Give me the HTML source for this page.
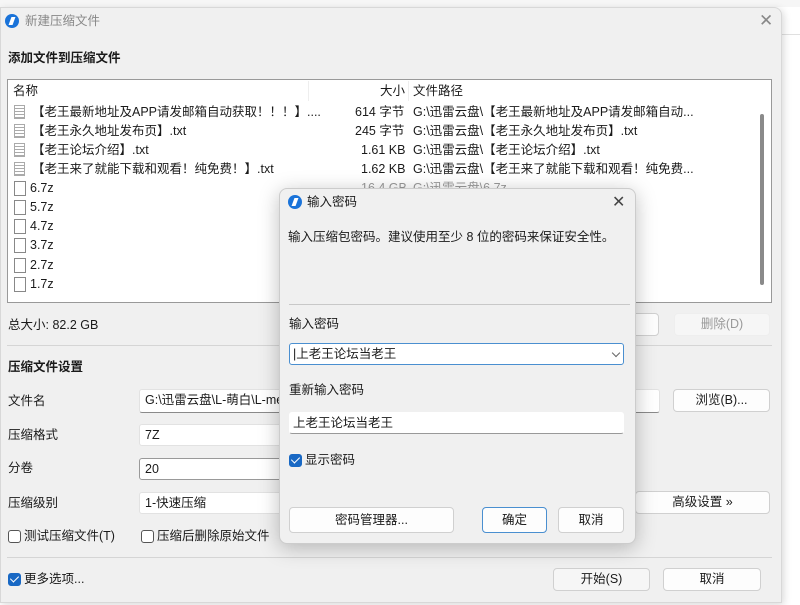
<!DOCTYPE html>
<html><head><meta charset="utf-8"><style>
*{box-sizing:border-box;margin:0;padding:0}
body{width:800px;height:605px;background:#fff;font-family:"Liberation Sans","Noto Sans CJK SC",sans-serif;font-size:12.5px;color:#1a1a1a;position:relative;overflow:hidden}
.a{position:absolute;white-space:nowrap;line-height:15px}
.win{position:absolute;left:0;top:7px;width:782px;height:596px;background:#f0f0f0;border:1px solid #d8d8d8;border-radius:0 8px 0 0;box-shadow:2px 2px 8px rgba(0,0,0,.15)}
.btn{position:absolute;background:#fdfdfd;border:1px solid #d0d0d0;border-radius:4px;text-align:center;line-height:21px}
.inp{position:absolute;background:#fff;border:1px solid #e2e2e2;border-bottom:1px solid #8a8a8a;border-radius:3px;padding-left:5px;line-height:20px}
.cb{position:absolute;width:13px;height:13px;border:1px solid #555;border-radius:3px;background:#fff}
.cb.on{background:#1868c4;border-color:#1868c4}
.cb.on:after{content:"";position:absolute;left:3px;top:0px;width:4px;height:7px;border:solid #fff;border-width:0 1.5px 1.5px 0;transform:rotate(45deg)}
.fi{position:absolute;width:12px;height:15px;border:1px solid #888;background:#fff}
.ti{position:absolute;width:11px;height:14px;background:repeating-linear-gradient(#fff 0 2px,#aaa 2px 3px);border:1px solid #aaa}
.logo{position:absolute;width:14px;height:14px;border-radius:50%;background:#1a73d9}
.logo:after{content:"";position:absolute;left:5px;top:3px;width:4px;height:8px;background:#fff;transform:skew(-20deg)}
.sep{position:absolute;height:1px;background:#d5d5d5}
.chev{position:absolute;width:6px;height:6px;border:solid #666;border-width:0 1px 1px 0;transform:rotate(45deg)}
</style></head><body>
<div class="a" style="left:0;top:0;width:800px;height:7px;background:#f6f6f6"></div>
<div class="a" style="left:782px;top:34px;width:18px;height:1px;background:#e0e0e0"></div>
<div class="win"></div>
<div class="logo" style="left:5px;top:14px"></div>
<div class="a" style="left:25px;top:14px;color:#888">新建压缩文件</div>
<div class="a" style="left:759px;top:12px;font-size:17px;line-height:18px;color:#888">✕</div>
<div class="a" style="left:8px;top:51px;font-weight:bold">添加文件到压缩文件</div>
<div class="a" style="left:7px;top:79px;width:765px;height:224px;background:#fff;border:1px solid #999"></div>
<div class="a" style="left:308px;top:81px;width:1px;height:20px;background:#eee"></div>
<div class="a" style="left:408px;top:81px;width:1px;height:20px;background:#eee"></div>
<div class="a" style="left:13px;top:84px">名称</div>
<div class="a" style="left:380px;top:84px">大小</div>
<div class="a" style="left:413px;top:84px">文件路径</div>
<div class="a" style="left:760px;top:114px;width:4px;height:171px;background:#8a8a8a;border-radius:2px"></div>

<div class="ti" style="left:14px;top:105px"></div><div class="a" style="left:32px;top:105px">【老王最新地址及APP请发邮箱自动获取！！！】....</div><div class="a" style="left:355px;top:105px">614 字节</div><div class="a" style="left:413px;top:105px">G:\迅雷云盘\【老王最新地址及APP请发邮箱自动...</div>
<div class="ti" style="left:14px;top:124px"></div><div class="a" style="left:32px;top:124px">【老王永久地址发布页】.txt</div><div class="a" style="left:355px;top:124px">245 字节</div><div class="a" style="left:413px;top:124px">G:\迅雷云盘\【老王永久地址发布页】.txt</div>
<div class="ti" style="left:14px;top:143px"></div><div class="a" style="left:32px;top:143px">【老王论坛介绍】.txt</div><div class="a" style="left:361px;top:143px">1.61 KB</div><div class="a" style="left:413px;top:143px">G:\迅雷云盘\【老王论坛介绍】.txt</div>
<div class="ti" style="left:14px;top:162px"></div><div class="a" style="left:32px;top:162px">【老王来了就能下载和观看！纯免费！】.txt</div><div class="a" style="left:361px;top:162px">1.62 KB</div><div class="a" style="left:413px;top:162px">G:\迅雷云盘\【老王来了就能下载和观看！纯免费...</div>
<div class="fi" style="left:14px;top:181px"></div><div class="a" style="left:30px;top:181px">6.7z</div><div class="a" style="left:361px;top:181px;color:#999">16.4 GB</div><div class="a" style="left:413px;top:181px;color:#999">G:\迅雷云盘\6.7z</div>
<div class="fi" style="left:14px;top:200px"></div><div class="a" style="left:30px;top:200px">5.7z</div>
<div class="fi" style="left:14px;top:219px"></div><div class="a" style="left:30px;top:219px">4.7z</div>
<div class="fi" style="left:14px;top:238px"></div><div class="a" style="left:30px;top:238px">3.7z</div>
<div class="fi" style="left:14px;top:258px"></div><div class="a" style="left:30px;top:258px">2.7z</div>
<div class="fi" style="left:14px;top:277px"></div><div class="a" style="left:30px;top:277px">1.7z</div>

<div class="a" style="left:8px;top:318px">总大小: 82.2 GB</div>
<div class="btn" style="left:560px;top:313px;width:99px;height:23px"></div>
<div class="btn" style="left:674px;top:313px;width:96px;height:23px;color:#999;background:#f6f6f6;border-color:#eee">删除(D)</div>
<div class="sep" style="left:7px;top:345px;width:765px"></div>
<div class="a" style="left:8px;top:360px;font-weight:bold">压缩文件设置</div>
<div class="a" style="left:8px;top:394px">文件名</div>
<div class="inp" style="left:139px;top:389px;width:521px;height:24px">G:\迅雷云盘\L-萌白\L-meng</div>
<div class="btn" style="left:673px;top:389px;width:97px;height:23px">浏览(B)...</div>
<div class="a" style="left:8px;top:428px">压缩格式</div>
<div class="inp" style="left:139px;top:424px;width:150px;height:22px;border-bottom-color:#e2e2e2">7Z</div>
<div class="a" style="left:8px;top:461px">分卷</div>
<div class="inp" style="left:139px;top:458px;width:150px;height:22px;border-color:#999">20</div>
<div class="a" style="left:8px;top:496px">压缩级别</div>
<div class="inp" style="left:139px;top:492px;width:150px;height:22px;border-bottom-color:#e2e2e2">1-快速压缩</div>
<div class="btn" style="left:635px;top:491px;width:135px;height:23px">高级设置 »</div>
<div class="cb" style="left:8px;top:530px"></div><div class="a" style="left:24px;top:529px">测试压缩文件(T)</div>
<div class="cb" style="left:141px;top:530px"></div><div class="a" style="left:157px;top:529px">压缩后删除原始文件</div>
<div class="sep" style="left:7px;top:557px;width:765px"></div>
<div class="cb on" style="left:8px;top:573px"></div><div class="a" style="left:24px;top:572px">更多选项...</div>
<div class="btn" style="left:553px;top:568px;width:97px;height:23px;background:#f6f6f6">开始(S)</div>
<div class="btn" style="left:663px;top:568px;width:98px;height:23px">取消</div>

<div class="a" style="left:279px;top:188px;width:357px;height:356px;background:#f0f0f0;border:1px solid #ccc;border-radius:8px;box-shadow:0 4px 20px rgba(0,0,0,.25)"></div>
<div class="logo" style="left:288px;top:195px"></div>
<div class="a" style="left:307px;top:195px">输入密码</div>
<div class="a" style="left:612px;top:194px;font-size:16px;line-height:17px;color:#444">✕</div>
<div class="a" style="left:288px;top:230px">输入压缩包密码。建议使用至少 8 位的密码来保证安全性。</div>
<div class="sep" style="left:289px;top:304px;width:341px;background:#c8c8c8"></div>
<div class="a" style="left:289px;top:317px">输入密码</div>
<div class="inp" style="left:289px;top:343px;width:335px;height:22px;border:1px solid #4a8fd0;padding-left:3px">|上老王论坛当老王</div>
<div class="chev" style="left:613px;top:350px"></div>
<div class="a" style="left:289px;top:383px">重新输入密码</div>
<div class="inp" style="left:289px;top:412px;width:335px;height:22px;border-color:#fff;border-bottom-color:#999;padding-left:3px">上老王论坛当老王</div>
<div class="cb on" style="left:289px;top:454px"></div><div class="a" style="left:305px;top:453px">显示密码</div>
<div class="btn" style="left:289px;top:507px;width:165px;height:26px;line-height:24px">密码管理器...</div>
<div class="btn" style="left:482px;top:507px;width:65px;height:26px;line-height:24px;border-color:#4a8fd0">确定</div>
<div class="btn" style="left:558px;top:507px;width:66px;height:26px;line-height:24px">取消</div>
</body></html>
